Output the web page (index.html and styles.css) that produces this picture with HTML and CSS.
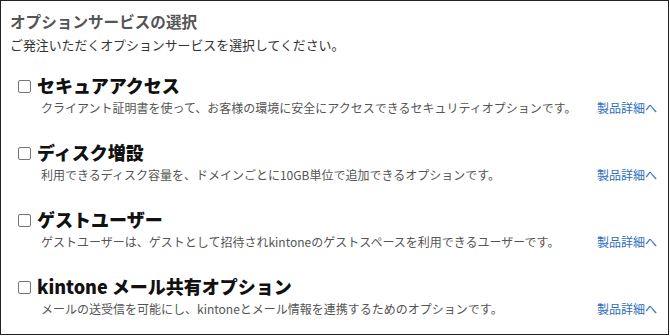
FILE: index.html
```html
<!DOCTYPE html>
<html lang="ja">
<head>
<meta charset="utf-8">
<link rel="stylesheet" href="styles.css">
</head>
<body>
<div class="panel">
  <h1 class="heading">オプションサービスの選択</h1>
  <p class="lead">ご発注いただくオプションサービスを選択してください。</p>
  <div class="option">
    <label class="option-title"><input type="checkbox" class="check"><span>セキュアアクセス</span></label>
    <div class="option-desc"><span>クライアント証明書を使って、お客様の環境に安全にアクセスできるセキュリティオプションです。</span><a class="more" href="#">製品詳細へ</a></div>
  </div>
  <div class="option">
    <label class="option-title"><input type="checkbox" class="check"><span>ディスク増設</span></label>
    <div class="option-desc"><span>利用できるディスク容量を、ドメインごとに10GB単位で追加できるオプションです。</span><a class="more" href="#">製品詳細へ</a></div>
  </div>
  <div class="option">
    <label class="option-title"><input type="checkbox" class="check"><span>ゲストユーザー</span></label>
    <div class="option-desc"><span>ゲストユーザーは、ゲストとして招待されkintoneのゲストスペースを利用できるユーザーです。</span><a class="more" href="#">製品詳細へ</a></div>
  </div>
  <div class="option">
    <label class="option-title"><input type="checkbox" class="check"><span>kintone メール共有オプション</span></label>
    <div class="option-desc"><span>メールの送受信を可能にし、kintoneとメール情報を連携するためのオプションです。</span><a class="more" href="#">製品詳細へ</a></div>
  </div>
</div>
</body>
</html>
```
FILE: styles.css
```css
html, body {
  margin: 0;
  padding: 0;
  background: #fff;
}
body {
  font-family: "Noto Sans CJK JP", "Noto Sans", sans-serif;
  color: #333;
}
.panel {
  box-sizing: border-box;
  width: 669px;
  height: 335px;
  border: 1px solid #222;
  padding: 9px 11px 0 9px;
}
.heading {
  margin: 0;
  font-size: 15.6px;
  line-height: 22px;
  font-weight: bold;
  color: #555;
}
.lead {
  margin: 3px 0 0;
  font-size: 12.9px;
  line-height: 20px;
  color: #333;
}
.option {
  margin-top: 17px;
}
.option + .option {
  margin-top: 22px;
}
.option-title {
  display: flex;
  align-items: center;
  gap: 6px;
  padding-left: 8px;
  font-size: 18px;
  line-height: 26px;
  font-weight: 900;
  color: #111;
}
.check {
  appearance: none;
  -webkit-appearance: none;
  box-sizing: border-box;
  width: 13px;
  height: 13px;
  margin: 3px 0 0;
  border: 1px solid #767676;
  border-radius: 2px;
  background: #fff;
}
.option-desc {
  display: flex;
  gap: 7px;
  margin-top: 1px;
  padding-left: 31px;
  font-size: 12px;
  line-height: 18px;
  color: #555;
  white-space: nowrap;
}
.more {
  margin-left: auto;
  color: #2b6cc0;
  text-decoration: none;
}
```
